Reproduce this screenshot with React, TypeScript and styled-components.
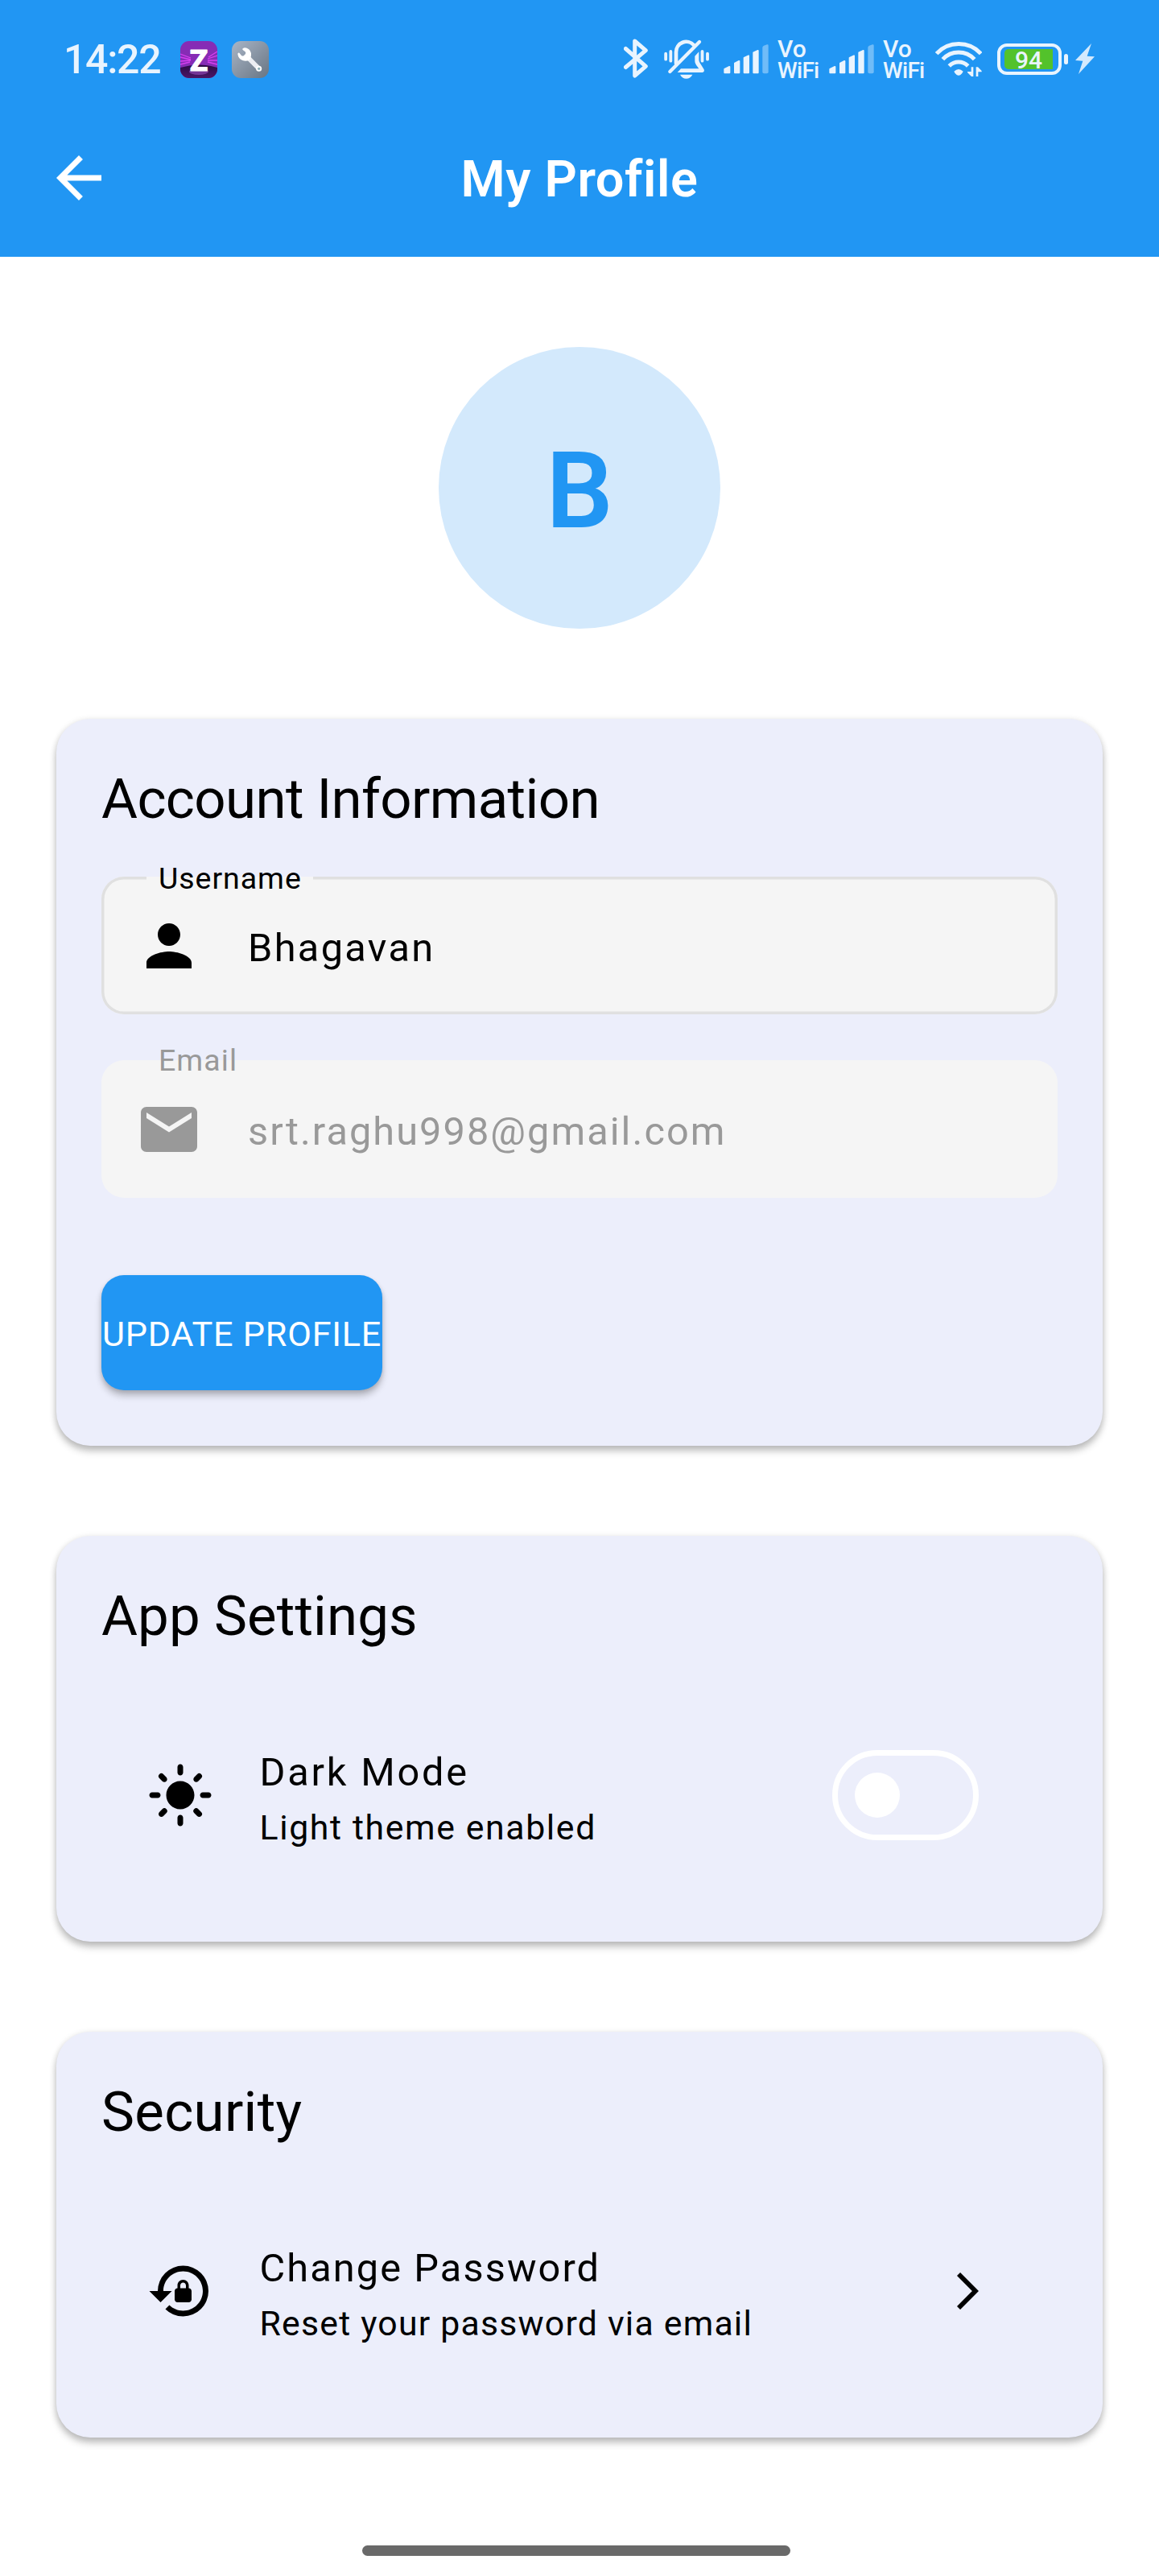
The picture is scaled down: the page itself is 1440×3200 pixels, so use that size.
import React from "react";
import styled, { createGlobalStyle } from "styled-components";
import { MdArrowBack, MdEmail, MdLightMode, MdLockReset, MdPerson } from "react-icons/md";

const blue = "#2196f3";
const statusInk = "#e9f4fe";
const surface = "#eceefb";
const fieldFill = "#f5f5f5";

const GlobalStyle = createGlobalStyle`
  *, *::before, *::after { box-sizing: border-box; }
  body {
    margin: 0;
    background: #ffffff;
    color: #000000;
    font-family: Roboto, "Noto Sans", sans-serif;
  }
  svg { display: block; flex: none; }
`;

const Screen = styled.div`
  width: 1440px;
  height: 3200px;
  display: flex;
  flex-direction: column;
  overflow: hidden;
  background: #ffffff;
`;

/* ---------- status bar ---------- */

const StatusBar = styled.div`
  flex: none;
  height: 123px;
  padding: 48px 80px 0 79px;
  display: flex;
  align-items: flex-start;
  background: ${blue};
  color: ${statusInk};
`;

const Clock = styled.span`
  width: 145px;
  line-height: 53px;
  font-size: 50px;
  font-weight: 500;
  letter-spacing: -1.3px;
`;

const Notifications = styled.div`
  display: flex;
  gap: 18px;
  padding-top: 3px;
`;

const StatusIcons = styled.div`
  margin-left: auto;
  display: flex;
  height: 50px;
`;

const Slot = styled.div<{ $gap?: number }>`
  margin-left: ${(p) => p.$gap ?? 0}px;
  flex: none;
`;

const VoWifi = styled.div`
  width: 52px;
  display: flex;
  flex-direction: column;
  font-weight: 500;
  white-space: nowrap;
`;

const VoLine = styled.span`
  font-size: 30px;
  line-height: 25px;
`;

const WifiLine = styled.span`
  font-size: 28px;
  line-height: 29px;
  letter-spacing: -0.7px;
`;

const BatteryBox = styled.div`
  display: flex;
  align-items: center;
  gap: 3px;
  height: 50px;
`;

const BatteryShell = styled.div`
  width: 80px;
  height: 39px;
  padding: 3px 5px;
  border: 4px solid ${statusInk};
  border-radius: 12px;
`;

const BatteryLevel = styled.div`
  width: 60px;
  height: 25px;
  display: flex;
  justify-content: center;
  border-radius: 5px 0 0 5px;
  background: #53c22b;
  font-size: 30px;
  line-height: 27px;
  font-weight: 500;
`;

const BatteryTip = styled.div`
  width: 5px;
  height: 13px;
  border-radius: 2.5px;
  background: ${statusInk};
`;

/* ---------- app bar and avatar ---------- */

const AppBar = styled.header`
  flex: none;
  height: 196px;
  padding: 0 56px;
  display: grid;
  grid-template-columns: 84px 1fr 84px;
  align-items: center;
  background: ${blue};
  color: #ffffff;
`;

const AppBarTitle = styled.h1`
  margin: 0;
  padding-top: 4px;
  text-align: center;
  font-size: 63px;
  line-height: 80px;
  font-weight: 600;
  letter-spacing: 0.6px;
`;

const Content = styled.main`
  flex: none;
  padding: 112px 70px 0;
  display: flex;
  flex-direction: column;
  gap: 112px;
`;

const Avatar = styled.div`
  align-self: center;
  width: 350px;
  height: 350px;
  padding-top: 8px;
  display: flex;
  align-items: center;
  justify-content: center;
  border-radius: 50%;
  background: #d3e9fc;
  color: ${blue};
  font-size: 131px;
  font-weight: 600;
`;

/* ---------- cards ---------- */

const Card = styled.section<{ $height: number }>`
  height: ${(p) => p.$height}px;
  padding: 56px 56px 0;
  border-radius: 42px;
  background: ${surface};
  box-shadow: 0 7px 10px rgba(0, 0, 0, 0.2), 0 2px 8px rgba(0, 0, 0, 0.14);
`;

const CardTitle = styled.h2<{ $track?: number }>`
  margin: 0;
  font-size: 69px;
  line-height: 88px;
  font-weight: 400;
  letter-spacing: ${(p) => p.$track ?? 0}px;
`;

const Fields = styled.div`
  padding-top: 52px;
  display: flex;
  flex-direction: column;
  gap: 57px;
`;

const Field = styled.div<{ $disabled?: boolean }>`
  position: relative;
  height: 171px;
  padding-left: 42px;
  display: flex;
  align-items: center;
  gap: 56px;
  border-radius: 28px;
  background: ${fieldFill};
  color: ${(p) => (p.$disabled ? "#999999" : "#000000")};
  box-shadow: ${(p) => (p.$disabled ? "none" : "inset 0 0 0 3.5px #e0e0e0")};
`;

const FieldLabel = styled.span<{ $top: number; $track: number }>`
  position: absolute;
  top: ${(p) => p.$top}px;
  left: 56px;
  padding: 0 14px 0 15px;
  font-size: 37.5px;
  line-height: 44px;
  letter-spacing: ${(p) => p.$track}px;
  background: linear-gradient(transparent ${(p) => -p.$top}px, ${fieldFill} ${(p) => -p.$top}px);
`;

const FieldValue = styled.span<{ $track: number }>`
  padding-top: 6px;
  font-size: 48.7px;
  line-height: 60px;
  letter-spacing: ${(p) => p.$track}px;
`;

const UpdateButton = styled.button`
  margin: 96px 0 0;
  padding: 3px 0 0;
  width: 349px;
  height: 143px;
  display: block;
  border: 0;
  border-radius: 28px;
  background: ${blue};
  color: #ffffff;
  font: inherit;
  font-size: 43.2px;
  letter-spacing: 0.75px;
  white-space: nowrap;
  box-shadow: 0 7px 9px rgba(0, 0, 0, 0.22), 0 2px 5px rgba(0, 0, 0, 0.12);
`;

const SettingRow = styled.div`
  height: 356px;
  padding: 0 98px 0 56px;
  display: flex;
  align-items: center;
`;

const SettingText = styled.div`
  flex: 1;
  padding: 11px 0 0 56.5px;
  display: flex;
  flex-direction: column;
`;

const SettingName = styled.span<{ $track: number }>`
  font-size: 48.7px;
  line-height: 70px;
  letter-spacing: ${(p) => p.$track}px;
`;

const SettingNote = styled.span<{ $track: number }>`
  font-size: 42.8px;
  line-height: 67px;
  letter-spacing: ${(p) => p.$track}px;
`;

const Switch = styled.div`
  width: 182px;
  height: 112px;
  padding-left: 21px;
  display: flex;
  align-items: center;
  border: 7px solid #ffffff;
  border-radius: 56px;
`;

const SwitchThumb = styled.div`
  width: 56px;
  height: 56px;
  border-radius: 50%;
  background: #ffffff;
`;

const HomeIndicator = styled.div`
  flex: none;
  width: 532px;
  height: 13px;
  margin: auto 0 25px 450px;
  border-radius: 7px;
  background: #696969;
`;

/* ---------- drawings ---------- */

const GameIcon = () => (
  <svg width="46" height="46" viewBox="0 0 46 46">
    <defs>
      <clipPath id="gameClip"><rect width="46" height="46" rx="11" /></clipPath>
      <linearGradient id="gameFloor" x1="0" y1="0" x2="0" y2="1">
        <stop offset="0" stopColor="#2c0b45" />
        <stop offset="1" stopColor="#4b1566" />
      </linearGradient>
    </defs>
    <g clipPath="url(#gameClip)">
      <rect width="46" height="46" fill="#862cb5" />
      <path d="M0 16 13 21M0 20 13 23M0 25 13 24M0 29 12 26M46 13 35 20M46 18 34 22M46 24 34 24M46 29 34 26" stroke="#d83ff0" strokeWidth="1.3" />
      <path d="M0 33Q23 26 46 33V46H0Z" fill="url(#gameFloor)" />
      <ellipse cx="23" cy="38" rx="12" ry="4" fill="#9a4fc0" opacity=".6" />
    </g>
    <text x="23" y="37" textAnchor="middle" fontFamily="Roboto, sans-serif" fontWeight="800" fontSize="37" fill="#fff" stroke="#fff" strokeWidth="1" strokeLinejoin="round">Z</text>
  </svg>
);

const ToolIcon = () => (
  <svg width="46" height="46" viewBox="864 153 138 138">
    <defs>
      <linearGradient id="steel" x1="0" y1="0" x2="1" y2="1">
        <stop offset="0" stopColor="#a9b5c6" />
        <stop offset="1" stopColor="#687583" />
      </linearGradient>
    </defs>
    <rect x="864" y="153" width="138" height="138" rx="34" fill="url(#steel)" />
    <path d="M928 218 965 256" stroke="#eceef3" strokeWidth="17" />
    <circle cx="965" cy="256" r="10.5" fill="#fff" />
    <path d="M905 181Q911 175 920 179Q938 187 936 206L934 218 926 226Q914 229 904 225Q888 219 886 201Q887 195 892 197L900 207Q905 210 909 207L915 201Q917 197 914 193L905 186Q902 183 905 181Z" fill="#fff" />
    <circle cx="965" cy="256" r="5" fill="#8fb0b8" />
  </svg>
);

const BluetoothIcon = () => (
  <svg width="30" height="50" viewBox="775 48 30 50" fill="none" stroke={statusInk} strokeWidth="5" strokeLinecap="round" strokeLinejoin="round">
    <path d="M777.4 60.5 802.3 82.3 788.7 94V51L802.3 62.6 777.4 83.5" />
  </svg>
);

const MutedBellIcon = () => (
  <svg width="58" height="50" viewBox="252 84 174 150" fill="none" stroke={statusInk} strokeLinecap="round">
    <path d="M277 207 387 96" strokeWidth="13" />
    <path d="M300 176V134A38 38 0 0 1 366 108" strokeWidth="14" />
    <path d="M385 133 370 149V168Q370 176 375 182L385 196H318L305 210H398Q407 208 404 199L389 175Q385 170 385 162Z" fill={statusInk} stroke="none" />
    <path d="M315 218H361Q353 233 338 233Q323 233 315 218Z" fill={statusInk} stroke="none" />
    <path d="M261.5 140V161M280 132V167M397.5 132V167M417 140V161" strokeWidth="11.5" />
  </svg>
);

const SignalIcon = () => (
  <svg width="56" height="50" viewBox="476 84 168 150" fill={statusInk} stroke={statusInk} strokeWidth="6" strokeLinejoin="round">
    <path d="M480 198 498 189V211H480Z" />
    <path d="M518 176 534 168V211H518Z" />
    <path d="M553 156 569 148V211H553Z" />
    <path d="M588 136 604 129V211H588Z" />
    <path d="M621 117Q621 112 626 110L638 106Q643 105 643 110V208Q643 214 637 214H627Q621 214 621 208Z" stroke="none" opacity=".4" />
  </svg>
);

const WifiIcon = () => (
  <svg width="58" height="50" viewBox="245 84 174 150" fill="none" stroke={statusInk} strokeWidth="15">
    <path d="M250 140A112 112 0 0 1 415 140" />
    <path d="M273 161A80 80 0 0 1 391 161" />
    <path d="M297 186A49 49 0 0 1 367 186" />
    <path d="M315 206Q332 190 349 206 347 212 339 219 332 224 325 219 317 212 315 206Z" fill={statusInk} stroke="none" />
    <path d="M387 190V225H380L365 210V207H379V190ZM397 225V190H404L418 204V208H405V225Z" fill={statusInk} stroke="none" />
  </svg>
);

const BoltIcon = () => (
  <svg width="24" height="50" viewBox="768 84 72 150" fill="#d3e9fd">
    <path d="M828 102 812 149 840 151 780 216 796 167 768 165Z" />
  </svg>
);

const ChevronIcon = () => (
  <svg width="27" height="46" viewBox="0 0 27 46" fill="none" stroke="#000" strokeWidth="5.8">
    <path d="M2 2 22.9 23 2 44" />
  </svg>
);

const VoWifiLabel = () => (
  <VoWifi>
    <VoLine>Vo</VoLine>
    <WifiLine>WiFi</WifiLine>
  </VoWifi>
);

export default function App() {
  return (
    <Screen>
      <GlobalStyle />
      <StatusBar>
        <Clock>14:22</Clock>
        <Notifications>
          <GameIcon />
          <ToolIcon />
        </Notifications>
        <StatusIcons>
          <Slot><BluetoothIcon /></Slot>
          <Slot $gap={19}><MutedBellIcon /></Slot>
          <Slot $gap={17}><SignalIcon /></Slot>
          <Slot $gap={11}><VoWifiLabel /></Slot>
          <Slot $gap={12}><SignalIcon /></Slot>
          <Slot $gap={11}><VoWifiLabel /></Slot>
          <Slot $gap={13}><WifiIcon /></Slot>
          <Slot $gap={19}>
            <BatteryBox>
              <BatteryShell>
                <BatteryLevel>94</BatteryLevel>
              </BatteryShell>
              <BatteryTip />
            </BatteryBox>
          </Slot>
          <Slot $gap={9}><BoltIcon /></Slot>
        </StatusIcons>
      </StatusBar>

      <AppBar>
        <MdArrowBack size={84} />
        <AppBarTitle>My Profile</AppBarTitle>
      </AppBar>

      <Content>
        <Avatar>B</Avatar>

        <Card $height={903}>
          <CardTitle $track={-0.63}>Account Information</CardTitle>
          <Fields>
            <Field>
              <FieldLabel $top={-20} $track={0.95}>Username</FieldLabel>
              <MdPerson size={84} />
              <FieldValue $track={2.35}>Bhagavan</FieldValue>
            </Field>
            <Field $disabled>
              <FieldLabel $top={-22} $track={1.05}>Email</FieldLabel>
              <MdEmail size={84} />
              <FieldValue $track={2.05}>srt.raghu998@gmail.com</FieldValue>
            </Field>
          </Fields>
          <UpdateButton>UPDATE PROFILE</UpdateButton>
        </Card>

        <Card $height={504}>
          <CardTitle $track={0.1}>App Settings</CardTitle>
          <SettingRow>
            <MdLightMode size={84} />
            <SettingText>
              <SettingName $track={2.8}>Dark Mode</SettingName>
              <SettingNote $track={1.62}>Light theme enabled</SettingNote>
            </SettingText>
            <Switch>
              <SwitchThumb />
            </Switch>
          </SettingRow>
        </Card>

        <Card $height={504}>
          <CardTitle $track={0.3}>Security</CardTitle>
          <SettingRow>
            <MdLockReset size={84} />
            <SettingText>
              <SettingName $track={2.1}>Change Password</SettingName>
              <SettingNote $track={1.2}>Reset your password via email</SettingNote>
            </SettingText>
            <ChevronIcon />
          </SettingRow>
        </Card>
      </Content>

      <HomeIndicator />
    </Screen>
  );
}
